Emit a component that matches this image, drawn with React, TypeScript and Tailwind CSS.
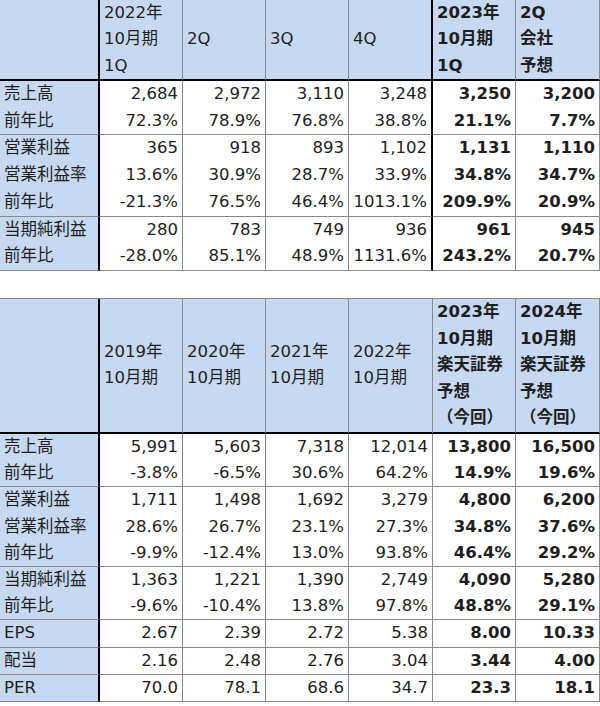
import React from "react";

type Group = string[][];

interface SheetProps {
  head: string[][];
  headHeight: string;
  lineHeight: string;
  groups: Group[];
  thickAfter4?: boolean;
  topBorder?: boolean;
}

// width of each column, first one is the label column
const GRID = "grid grid-cols-[100px_83px_83px_83px_84px_83px_84px]";

const rightBorder = (c: number, thickAfter4?: boolean) => {
  if (c === 0) return "border-r-2 border-r-black";
  if (c === 4 && thickAfter4) return "border-r-2 border-r-black";
  return "border-r border-r-[#8a8a8a]";
};

const Sheet = ({ head, headHeight, lineHeight, groups, thickAfter4, topBorder }: SheetProps) => {
  return (
    <div className={topBorder ? `${GRID} border-t border-t-[#8a8a8a]` : GRID}>
      {head.map((lines, c) => (
        <div
          key={`h${c}`}
          className={`${headHeight} ${rightBorder(c, thickAfter4)} border-b-2 border-b-black bg-[#c6d9f1] flex flex-col justify-center pl-1 leading-[26.5px] ${c >= 5 ? "font-bold" : ""}`}
        >
          {lines.map((t, i) => (
            <span key={i} className="whitespace-nowrap">{t}</span>
          ))}
        </div>
      ))}

      {groups.map((rows, g) =>
        head.map((_, c) => (
          <div
            key={`g${g}c${c}`}
            className={`${rightBorder(c, thickAfter4)} border-b border-b-[#8a8a8a] flex flex-col ${lineHeight} ${
              c === 0 ? "bg-[#c6d9f1] pl-1 items-start" : "pr-1 items-end"
            } ${c >= 5 ? "font-bold" : ""}`}
          >
            {rows.map((r, i) => (
              <span key={i} className="whitespace-nowrap">{r[c]}</span>
            ))}
          </div>
        ))
      )}
    </div>
  );
};

const quarterHead = [
  [],
  ["2022年", "10月期", "1Q"],
  ["2Q"],
  ["3Q"],
  ["4Q"],
  ["2023年", "10月期", "1Q"],
  ["2Q", "会社", "予想"],
];

const quarterGroups: Group[] = [
  [
    ["売上高", "2,684", "2,972", "3,110", "3,248", "3,250", "3,200"],
    ["前年比", "72.3%", "78.9%", "76.8%", "38.8%", "21.1%", "7.7%"],
  ],
  [
    ["営業利益", "365", "918", "893", "1,102", "1,131", "1,110"],
    ["営業利益率", "13.6%", "30.9%", "28.7%", "33.9%", "34.8%", "34.7%"],
    ["前年比", "-21.3%", "76.5%", "46.4%", "1013.1%", "209.9%", "20.9%"],
  ],
  [
    ["当期純利益", "280", "783", "749", "936", "961", "945"],
    ["前年比", "-28.0%", "85.1%", "48.9%", "1131.6%", "243.2%", "20.7%"],
  ],
];

const yearHead = [
  [],
  ["2019年", "10月期"],
  ["2020年", "10月期"],
  ["2021年", "10月期"],
  ["2022年", "10月期"],
  ["2023年", "10月期", "楽天証券", "予想", "（今回）"],
  ["2024年", "10月期", "楽天証券", "予想", "（今回）"],
];

const yearGroups: Group[] = [
  [
    ["売上高", "5,991", "5,603", "7,318", "12,014", "13,800", "16,500"],
    ["前年比", "-3.8%", "-6.5%", "30.6%", "64.2%", "14.9%", "19.6%"],
  ],
  [
    ["営業利益", "1,711", "1,498", "1,692", "3,279", "4,800", "6,200"],
    ["営業利益率", "28.6%", "26.7%", "23.1%", "27.3%", "34.8%", "37.6%"],
    ["前年比", "-9.9%", "-12.4%", "13.0%", "93.8%", "46.4%", "29.2%"],
  ],
  [
    ["当期純利益", "1,363", "1,221", "1,390", "2,749", "4,090", "5,280"],
    ["前年比", "-9.6%", "-10.4%", "13.8%", "97.8%", "48.8%", "29.1%"],
  ],
  [["EPS", "2.67", "2.39", "2.72", "5.38", "8.00", "10.33"]],
  [["配当", "2.16", "2.48", "2.76", "3.04", "3.44", "4.00"]],
  [["PER", "70.0", "78.1", "68.6", "34.7", "23.3", "18.1"]],
];

export default function App() {
  return (
    <div className="w-[600px] h-[706px] bg-white text-[#1e1e1e] text-[16.5px] font-['DejaVu_Sans','Noto_Sans_CJK_JP',sans-serif] overflow-hidden">
      <Sheet
        head={quarterHead}
        headHeight="h-[81px]"
        lineHeight="leading-[26.7px]"
        groups={quarterGroups}
        thickAfter4
      />
      <div className="h-[27px]" />
      <Sheet
        head={yearHead}
        headHeight="h-[135px]"
        lineHeight="leading-[26.2px]"
        groups={yearGroups}
        topBorder
      />
    </div>
  );
}
